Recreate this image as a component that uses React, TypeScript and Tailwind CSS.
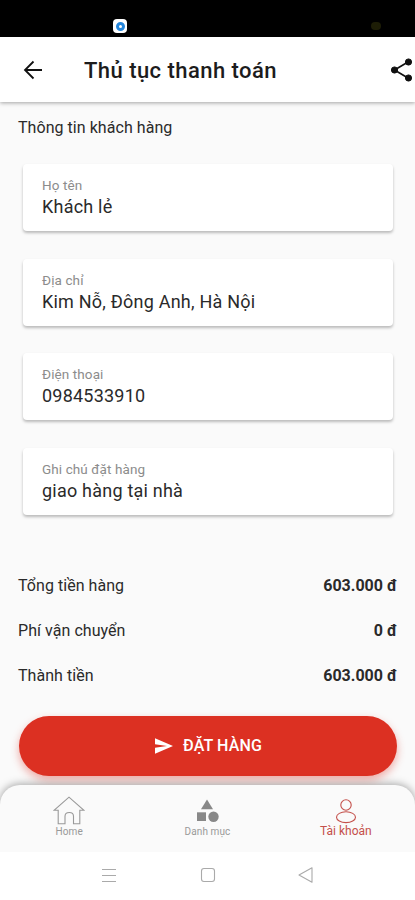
import { useState } from "react";

const fields = [
  { label: "Họ tên", value: "Khách lẻ" },
  { label: "Địa chỉ", value: "Kim Nỗ, Đông Anh, Hà Nội" },
  { label: "Điện thoại", value: "0984533910" },
  { label: "Ghi chú đặt hàng", value: "giao hàng tại nhà" },
];

const totals = [
  { label: "Tổng tiền hàng", value: "603.000 đ" },
  { label: "Phí vận chuyển", value: "0 đ" },
  { label: "Thành tiền", value: "603.000 đ" },
];

function HomeIcon() {
  return (
    <svg width="32" height="30" viewBox="0 0 32 30" fill="none" stroke="currentColor" strokeWidth="1.1">
      <path d="M5.2 14.2H1.3L16 1.2l14.7 13h-3.9v13.6h-6.3v-7.6c0-2.3-1.6-3.7-4.2-3.7s-4.3 1.4-4.3 3.7v7.6H5.2z" />
    </svg>
  );
}

function CategoryIcon() {
  return (
    <svg width="24" height="27" viewBox="0 0 24 27" fill="#888">
      <path d="M12 .6 18 10.2H6z" />
      <path d="M2 13.3h9V22H2z" />
      <circle cx="18.5" cy="17.7" r="5.2" />
    </svg>
  );
}

function AccountIcon() {
  return (
    <svg width="22" height="28" viewBox="0 0 22 28" fill="none" stroke="currentColor" strokeWidth="1.1">
      <circle cx="11" cy="7" r="5.2" />
      <ellipse cx="11" cy="19.2" rx="9.5" ry="5.4" />
    </svg>
  );
}

const tabs = [
  { id: "home", label: "Home", icon: <HomeIcon /> },
  { id: "category", label: "Danh mục", icon: <CategoryIcon /> },
  { id: "account", label: "Tài khoản", icon: <AccountIcon /> },
];

export default function App() {
  const [active, setActive] = useState("account");

  return (
    <div className="flex h-[900px] w-[415px] flex-col overflow-hidden bg-[#fafafa] font-['Roboto','Noto_Sans',sans-serif] text-[#2a2a2a]">
      <div className="flex h-[37px] shrink-0 items-end justify-between bg-black pr-[34px] pb-1 pl-[113px]">
        <span className="flex size-[14px] items-center justify-center rounded-[4px] bg-white">
          <span className="size-[9px] rounded-full border-[3px] border-[#2486dc] bg-white" />
        </span>
        <span className="mb-[3px] h-2 w-[10px] rounded-sm bg-[#1d1d06]" />
      </div>

      <header className="z-10 flex h-[65px] shrink-0 items-center bg-white pl-[21px] shadow-[0_1px_4px_rgba(0,0,0,0.35)]">
        <button type="button" aria-label="Back">
          <svg width="24" height="24" viewBox="0 0 24 24" fill="none" stroke="#111" strokeWidth="1.8">
            <path d="M21 12H4M12.5 3.5 4 12l8.5 8.5" />
          </svg>
        </button>
        <h1 className="mt-[2px] ml-[39px] text-[22px] font-medium tracking-[0.45px] text-[#1c1c1c]">
          Thủ tục thanh toán
        </h1>
        <button type="button" aria-label="Share" className="ml-auto">
          <svg width="26" height="26" viewBox="0 0 26 26" fill="#111" stroke="#111">
            <path d="M19 5 5.5 13 19 21" fill="none" strokeWidth="1.7" />
            <circle cx="19.5" cy="5" r="3.1" />
            <circle cx="5.5" cy="13" r="3.1" />
            <circle cx="19.5" cy="21" r="3.1" />
          </svg>
        </button>
      </header>

      <main className="flex h-[683px] shrink-0 flex-col">
        <h2 className="mt-[14px] ml-[18px] text-base leading-6 font-normal tracking-[0.05px]">Thông tin khách hàng</h2>

        <div className="mt-6 flex flex-col gap-[27.5px] pr-[22px] pl-[23px]">
          {fields.map((field) => (
            <div
              key={field.label}
              className="flex h-[67px] flex-col rounded-[4px] bg-white pt-3 pl-[19px] shadow-[0_2px_3px_rgba(0,0,0,0.26)]"
            >
              <span className="text-[13.5px] leading-[18px] tracking-[0.1px] text-[#8c8c8c]">{field.label}</span>
              <span className="text-[18px] leading-[25px] tracking-[0.22px]">{field.value}</span>
            </div>
          ))}
        </div>

        <div className="mt-[49px] flex flex-col px-[18px]">
          {totals.map((row) => (
            <div key={row.label} className="flex h-[45px] items-center justify-between text-base">
              <span className="tracking-[0.05px]">{row.label}</span>
              <span className="font-bold">{row.value}</span>
            </div>
          ))}
        </div>

        <button
          type="button"
          className="mt-[17px] mr-[18px] ml-[19px] flex h-[60px] shrink-0 items-center justify-center gap-[9px] rounded-full bg-[#dc3022] text-white shadow-[0_4px_8px_rgba(220,48,34,0.4)]"
        >
          <svg width="20" height="18" viewBox="0 0 20 18" fill="currentColor">
            <path d="M1 1.2 19 9 1 16.8v-6L13 9 1 7.2z" />
          </svg>
          <span className="text-base font-medium tracking-[0.15px]">ĐẶT HÀNG</span>
        </button>
      </main>

      <nav className="z-10 flex h-[67px] shrink-0 rounded-t-[20px] bg-[#fafafa] shadow-[0_-1px_9px_rgba(0,0,0,0.35)]">
        {tabs.map((tab) => (
          <button
            key={tab.id}
            type="button"
            onClick={() => setActive(tab.id)}
            className={`flex flex-1 flex-col items-center ${active === tab.id ? "text-[#c4504b]" : "text-[#999]"}`}
          >
            <span className="flex h-[41px] items-end">{tab.icon}</span>
            <span className={active === tab.id ? "text-xs leading-[11px]" : "text-[10px] leading-3 tracking-[0.1px]"}>
              {tab.label}
            </span>
          </button>
        ))}
      </nav>

      <div className="z-10 flex h-[50px] shrink-0 items-center justify-between bg-white px-[101px] pb-1 text-[#aaa]">
        <svg width="16" height="16" viewBox="0 0 16 16" stroke="currentColor" strokeWidth="1">
          <path d="M1 2.5h14M1 8.5h14M1 14.5h14" />
        </svg>
        <svg width="16" height="16" viewBox="0 0 16 16" fill="none" stroke="currentColor" strokeWidth="1.1">
          <rect x="1.5" y="1.5" width="13" height="13" rx="2.5" />
        </svg>
        <svg width="16" height="16" viewBox="0 0 16 16" fill="none" stroke="currentColor" strokeWidth="1.1" strokeLinejoin="round">
          <path d="M14 .8v14.4L1 8z" />
        </svg>
      </div>
    </div>
  );
}
